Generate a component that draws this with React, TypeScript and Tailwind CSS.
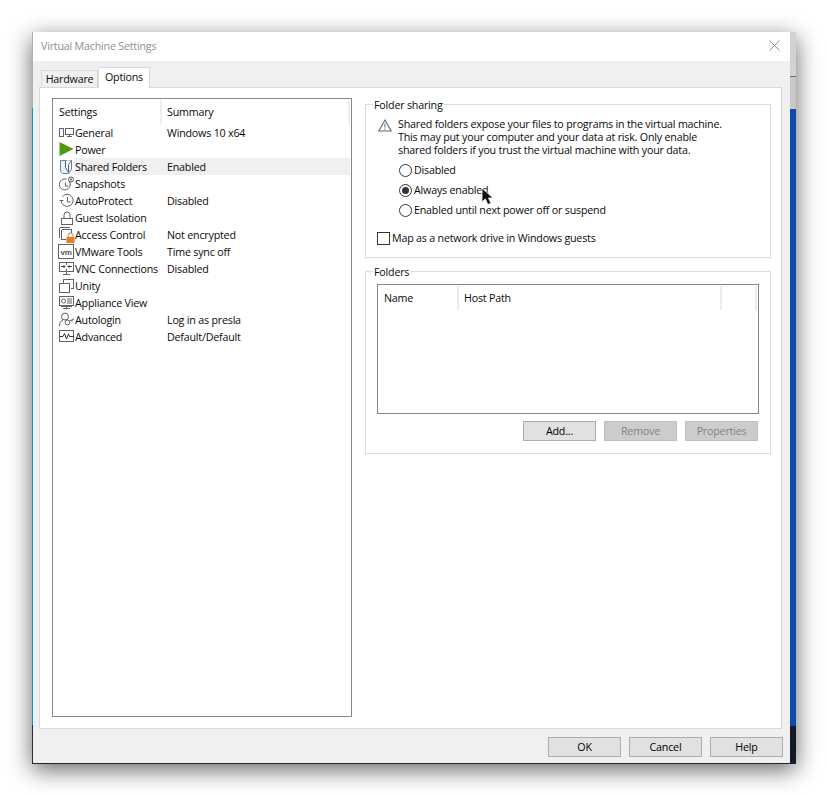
const S = "#5f6368";

const Svg = ({ children }: { children: React.ReactNode }) => (
  <svg width="16" height="16" viewBox="0 0 16 16" fill="none" stroke={S} strokeWidth="1" className="block">
    {children}
  </svg>
);

const icons: Record<string, React.ReactNode> = {
  general: (
    <Svg>
      <path d="M0.5 3.5h4v8h-4zM6.5 3.5h8v6h-8zM10.5 9.5v2M8 11.5h5" shapeRendering="crispEdges" />
    </Svg>
  ),
  power: (
    <svg width="16" height="16" viewBox="0 0 16 16" className="block overflow-visible">
      <path d="M0.5 0L14.5 7L0.5 14z" fill="#4f9a0c" />
    </svg>
  ),
  shared: (
    <Svg>
      <path d="M1.5 1.5h11v9l-3 4h-6l-2-2z" stroke="#6f8296" fill="#eaf1f7" />
      <path d="M6.5 1.5v7l3 5v-8l3-4" stroke="#4a6a8a" fill="#ffffff" />
    </Svg>
  ),
  snapshots: (
    <Svg>
      <path d="M10.5 5.5a5.5 5.5 0 1 1-3-2.3" />
      <path d="M6.5 6.5v3.5h3" />
      <circle cx="12" cy="3.5" r="2.5" fill="#fff" stroke="#555" />
      <circle cx="12" cy="3.5" r="1" fill="#555" stroke="none" />
    </Svg>
  ),
  autoprotect: (
    <Svg>
      <path d="M2.5 9.5A6 6 0 1 0 3.5 3.5" />
      <path d="M0.5 7.5h4M2.5 7.5v2" />
      <path d="M8.5 4v5h3" />
    </Svg>
  ),
  guest: (
    <Svg>
      <path d="M2.5 8.5h11v6h-11z" shapeRendering="crispEdges" />
      <path d="M5 8V5a3 3 0 0 1 6 0v3" />
    </Svg>
  ),
  access: (
    <Svg>
      <path d="M0.5 0.5h10M0.5 0.5v10M2.5 2.5h10v3M2.5 2.5v10h4" shapeRendering="crispEdges" />
      <path d="M9 10V8.5a2.5 2.5 0 0 1 5 0V10" stroke="#e8771e" />
      <path d="M7.5 10h8v6h-8z" fill="#ee7a1c" stroke="none" />
    </Svg>
  ),
  tools: (
    <svg width="17" height="16" viewBox="0 0 17 16" className="block -ml-px">
      <rect x="0.5" y="0.5" width="15" height="14" fill="#fff" stroke="#5f6368" />
      <text x="8" y="10.5" textAnchor="middle" fontSize="8" fontWeight="700" fill="#555" fontFamily="'Liberation Sans', sans-serif">vm</text>
    </svg>
  ),
  vnc: (
    <Svg>
      <path d="M0.5 1.5h14v9h-14zM7.5 1.5v2M7.5 8v2.5M7.5 10.5v3M4 13.5h7" shapeRendering="crispEdges" />
      <path d="M2 5.5h4M4.5 4l1.5 1.5-1.5 1.5M13 5.5h-4M10.5 4L9 5.5 10.5 7" stroke="#444" />
    </Svg>
  ),
  unity: (
    <Svg>
      <path d="M4.5 4.5v-3h10v9h-3" shapeRendering="crispEdges" />
      <path d="M0.5 5.5h10v9h-10z" shapeRendering="crispEdges" />
    </Svg>
  ),
  appliance: (
    <Svg>
      <path d="M0.5 1.5h14v9h-14zM7.5 10.5v3M4 13.5h7M2 11.5h11" shapeRendering="crispEdges" />
      <circle cx="4.5" cy="6" r="2" />
      <path d="M8 4h5M8 6h5M8 8h5" />
    </Svg>
  ),
  autologin: (
    <Svg>
      <circle cx="6" cy="4.5" r="3.5" />
      <path d="M0.5 14c0-3 1-5 3.5-6" />
      <circle cx="8.5" cy="10.5" r="2.4" />
      <path d="M10.5 9l4.5-2M13 8v1.5" />
    </Svg>
  ),
  advanced: (
    <Svg>
      <path d="M0.5 1.5h14v11h-14z" shapeRendering="crispEdges" />
      <path d="M1 7.5h3l1.5-3 2 5.5 2-5 1 2.5h4" stroke="#333" />
    </Svg>
  ),
};

const rows = [
  ["general", "General", "Windows 10 x64"],
  ["power", "Power", ""],
  ["shared", "Shared Folders", "Enabled"],
  ["snapshots", "Snapshots", ""],
  ["autoprotect", "AutoProtect", "Disabled"],
  ["guest", "Guest Isolation", ""],
  ["access", "Access Control", "Not encrypted"],
  ["tools", "VMware Tools", "Time sync off"],
  ["vnc", "VNC Connections", "Disabled"],
  ["unity", "Unity", ""],
  ["appliance", "Appliance View", ""],
  ["autologin", "Autologin", "Log in as presla"],
  ["advanced", "Advanced", "Default/Default"],
];

const Radio = ({ label, on }: { label: string; on?: boolean }) => (
  <div className="flex items-center h-5 pl-[33px]">
    <span className="flex items-center justify-center w-[13px] h-[13px] rounded-full border border-[#333] bg-white shrink-0">
      {on && <span className="w-[7px] h-[7px] rounded-full bg-[#333]" />}
    </span>
    <span className="ml-[2px]">{label}</span>
  </div>
);

const Btn = ({ label, off }: { label: string; off?: boolean }) => (
  <div
    className={
      "flex items-center justify-center w-[73px] h-[20px] pt-px border " +
      (off ? "bg-[#cccccc] border-[#bfbfbf] text-[#838383]" : "bg-[#e1e1e1] border-[#adadad] text-black")
    }
  >
    {label}
  </div>
);

const Group = ({ title, className, children }: { title: string; className: string; children: React.ReactNode }) => (
  <div className={"relative border border-[#dcdcdc] " + className}>
    <span className="absolute -top-[8px] left-[7px] px-px bg-white leading-[16px]">{title}</span>
    {children}
  </div>
);

const Cell = ({ label, className }: { label: string; className: string }) => (
  <div className={"h-[24px] flex items-center border-r-2 border-[#ededed] " + className}>{label}</div>
);

export default function App() {
  return (
    <div
      className="w-[828px] h-[797px] bg-white overflow-hidden pt-8 pl-8 text-[10.7px] tracking-[-0.2px] leading-[13px] text-[#0a0a0a]"
      style={{ fontFamily: "'Open Sans', sans-serif" }}
    >
      <div className="flex flex-col w-[764px] h-[732px] shadow-[0_6px_22px_rgba(0,0,0,0.6)]">
        <div className="flex h-[731px]">
          <div className="flex flex-col w-px">
            <div className="h-[76px] bg-[#b0b0b0]" />
            <div className="h-[617px] bg-[#1593c9]" />
            <div className="flex-1 bg-[#20303c]" />
          </div>

          <div className="flex flex-col w-[757px]">
            <div className="flex items-center justify-between h-[29px] bg-white pl-2 pr-[10px]">
              <span className="text-[#8f8f8f] -mt-px">Virtual Machine Settings</span>
              <svg width="11" height="11" viewBox="0 0 11 11" stroke="#8a8a8a" strokeWidth="1" className="-mt-[2px]">
                <path d="M0.5 0.5L10.5 10.5M10.5 0.5L0.5 10.5" />
              </svg>
            </div>

            <div className="flex flex-col flex-1 bg-[#f0f0f0] pl-[6px]">
              <div className="flex items-end h-[26px] pl-[2px]">
                <div className="flex items-center justify-center w-[57px] h-[17px] border border-b-0 border-[#d9d9d9]">Hardware</div>
                <div className="relative z-10 -mb-px flex items-center justify-center w-[52px] h-[21px] pb-[2px] border border-b-0 border-[#d9d9d9] bg-white">Options</div>
              </div>

              <div className="flex w-[743px] h-[642px] border border-[#d9d9d9] bg-white pl-3 pt-[10px]">
                <div className="w-[300px] h-[619px] border border-[#828790]">
                  <div className="flex h-[25px] pt-px">
                    <Cell label="Settings" className="w-[109px] pl-[6px]" />
                    <Cell label="Summary" className="w-[188px] pl-[5px]" />
                  </div>
                  {rows.map(([k, name, sum]) => (
                    <div key={k} className="flex h-[17px]">
                      <div className="w-[21px] pl-[6px] shrink-0 pt-px">{icons[k]}</div>
                      <div className={"flex items-center flex-1 mr-px pt-[2px] " + (k === "shared" ? "bg-[#f0f0f0]" : "")}>
                        <span className="w-[93px] pl-px shrink-0 whitespace-nowrap">{name}</span>
                        <span>{sum}</span>
                      </div>
                    </div>
                  ))}
                </div>

                <div className="flex flex-col gap-[13px] ml-[13px] pt-[6px]">
                  <Group title="Folder sharing" className="w-[406px] h-[154px] pt-[13px]">
                    <div className="flex pl-3">
                      <svg width="14" height="13" viewBox="0 0 14 13" className="mt-px shrink-0">
                        <path d="M7 1L13.2 12H0.8z" fill="#fff" stroke="#5f6a72" strokeWidth="1.1" />
                        <path d="M7 4.5v4M7 9.5v1.2" stroke="#5f6a72" strokeWidth="1.1" />
                      </svg>
                      <div className="ml-[6px] whitespace-nowrap">
                        <div>Shared folders expose your files to programs in the virtual machine.</div>
                        <div>This may put your computer and your data at risk. Only enable</div>
                        <div>shared folders if you trust the virtual machine with your data.</div>
                      </div>
                    </div>
                    <div className="relative mt-[3px]">
                      <Radio label="Disabled" />
                      <Radio label="Always enabled" on />
                      <Radio label="Enabled until next power off or suspend" />
                      <svg width="15" height="19" viewBox="0 0 15 19" className="absolute left-[115px] top-[27px]">
                        <path d="M1 1V15L4.4 12L6.8 17.5L10 16.2L7.5 11H12z" fill="#111" stroke="#fff" strokeWidth="0.8" />
                      </svg>
                    </div>
                    <div className="flex items-center h-[14px] mt-[11px] pl-[11px]">
                      <span className="w-[13px] h-[13px] border border-[#333] bg-white shrink-0" />
                      <span className="ml-[2px]">Map as a network drive in Windows guests</span>
                    </div>
                  </Group>

                  <Group title="Folders" className="w-[406px] h-[183px] pt-3 pl-[11px]">
                    <div className="w-[382px] h-[130px] border border-[#828790]">
                      <div className="flex pt-px">
                        <Cell label="Name" className="w-[81px] pl-[6px]" />
                        <Cell label="Host Path" className="w-[263px] pl-[5px]" />
                        <Cell label="" className="w-[35px]" />
                      </div>
                    </div>
                    <div className="flex justify-end gap-2 w-[381px] mt-[7px]">
                      <Btn label="Add..." />
                      <Btn label="Remove" off />
                      <Btn label="Properties" off />
                    </div>
                  </Group>
                </div>
              </div>

              <div className="flex justify-end gap-2 pr-[7px] pt-[8px] w-[751px]">
                <Btn label="OK" />
                <Btn label="Cancel" />
                <Btn label="Help" />
              </div>
            </div>
          </div>

          <div className="flex flex-col w-[6px]">
            <div className="h-[44px] bg-[#d2d2d2]" />
            <div className="h-px bg-[#6e6e6e]" />
            <div className="h-[32px] bg-[#c8c8c8]" />
            <div className="h-[617px] bg-[#0d4da8]" />
            <div className="flex-1 bg-[#141a26]" />
          </div>
        </div>
        <div className="h-px bg-[#1c2834]" />
      </div>
    </div>
  );
}
